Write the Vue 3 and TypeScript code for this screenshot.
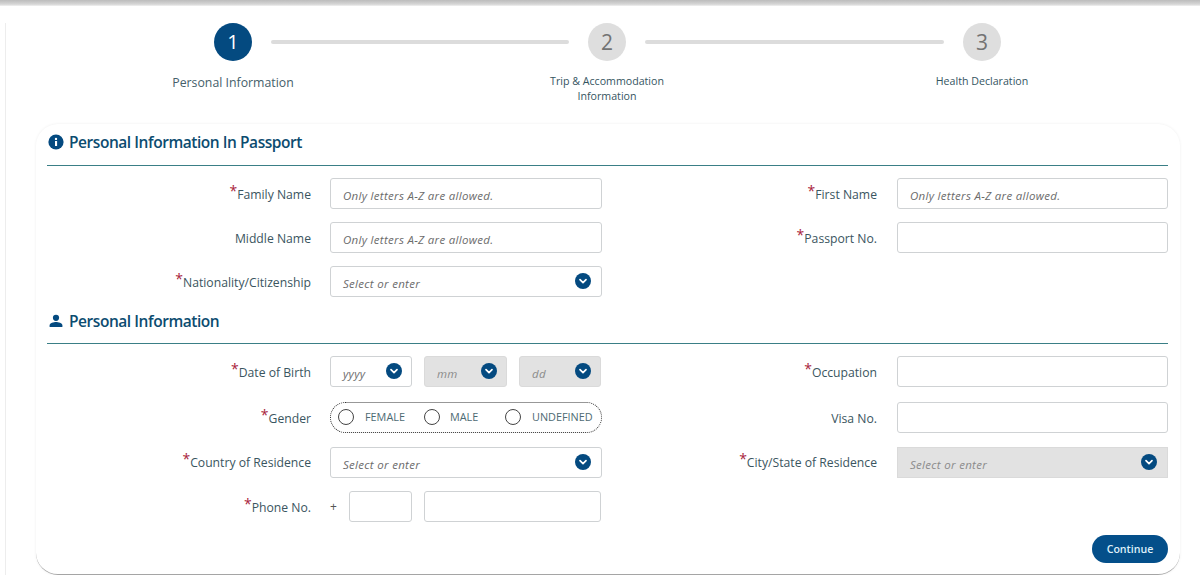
<script setup lang="ts">
const steps = [
  { n: 1, active: true },
  { n: 2, active: false },
  { n: 3, active: false },
]
</script>

<template>
  <div class="page">
    <div class="topbar"></div>
    <div class="shell">
      <div class="stepper">
        <template v-for="(s, i) in steps" :key="s.n">
          <div class="circle" :class="{ on: s.active }">{{ s.n }}</div>
          <div v-if="i < 2" class="line"></div>
        </template>
        <div class="step-label big c1">Personal Information</div>
        <div class="step-label c3">Trip &amp; Accommodation<br />Information</div>
        <div class="step-label c5">Health Declaration</div>
      </div>

      <div class="card">
        <h2 class="section-title first">
          <svg class="title-icon" viewBox="0 0 16 16" width="16" height="16">
            <circle cx="8" cy="8" r="7.6" fill="#044a80" />
            <rect x="7" y="7" width="2.1" height="5" fill="#fff" />
            <circle cx="8" cy="4.9" r="1.2" fill="#fff" />
          </svg>
          Personal Information In Passport
        </h2>
        <div class="form-grid tight">
          <label class="lab"><i>*</i>Family Name</label>
          <input class="box" placeholder="Only letters A-Z are allowed." />
          <label class="lab r"><i>*</i>First Name</label>
          <input class="box" placeholder="Only letters A-Z are allowed." />

          <label class="lab">Middle Name</label>
          <input class="box" placeholder="Only letters A-Z are allowed." />
          <label class="lab r"><i>*</i>Passport No.</label>
          <input class="box" />

          <label class="lab"><i>*</i>Nationality/Citizenship</label>
          <div class="box sel"><span>Select or enter</span><b class="chev"><svg viewBox="0 0 16 16"><path d="M5 6.6 8 9.6 11 6.6" /></svg></b></div>
        </div>

        <h2 class="section-title second">
          <svg class="title-icon" viewBox="0 0 16 16" width="16" height="16">
            <circle cx="8" cy="4.8" r="3.1" fill="#044a80" />
            <path d="M1.6 14v-1.6c0-2.3 4.2-3.3 6.4-3.3s6.4 1 6.4 3.3V14z" fill="#044a80" />
          </svg>
          Personal Information
        </h2>
        <div class="form-grid loose">
          <label class="lab"><i>*</i>Date of Birth</label>
          <div class="triple">
            <div class="box sel small"><span>yyyy</span><b class="chev"><svg viewBox="0 0 16 16"><path d="M5 6.6 8 9.6 11 6.6" /></svg></b></div>
            <div class="box sel small off"><span>mm</span><b class="chev"><svg viewBox="0 0 16 16"><path d="M5 6.6 8 9.6 11 6.6" /></svg></b></div>
            <div class="box sel small off"><span>dd</span><b class="chev"><svg viewBox="0 0 16 16"><path d="M5 6.6 8 9.6 11 6.6" /></svg></b></div>
          </div>
          <label class="lab r"><i>*</i>Occupation</label>
          <input class="box" />

          <label class="lab"><i>*</i>Gender</label>
          <div class="gender">
            <span class="opt"><em></em>FEMALE</span>
            <span class="opt"><em></em>MALE</span>
            <span class="opt"><em></em>UNDEFINED</span>
          </div>
          <label class="lab r">Visa No.</label>
          <input class="box" />

          <label class="lab"><i>*</i>Country of Residence</label>
          <div class="box sel"><span>Select or enter</span><b class="chev"><svg viewBox="0 0 16 16"><path d="M5 6.6 8 9.6 11 6.6" /></svg></b></div>
          <label class="lab r"><i>*</i>City/State of Residence</label>
          <div class="box sel off square"><span>Select or enter</span><b class="chev"><svg viewBox="0 0 16 16"><path d="M5 6.6 8 9.6 11 6.6" /></svg></b></div>

          <label class="lab"><i>*</i>Phone No.</label>
          <div class="triple phone">
            <div class="plus-cell"><span class="plus">+</span><input class="box" /></div>
            <input class="box" />
          </div>
        </div>
        <div class="actions"><button class="continue">Continue</button></div>
      </div>
    </div>
  </div>
</template>

<style>
html, body { margin: 0; background: #fff; }
</style>

<style scoped>
.page {
  height: 575px;
  overflow: hidden;
  background: #fff;
  font-family: "Open Sans", "Noto Sans", sans-serif;
  color: #3a5560;
}
.topbar {
  height: 6px;
  background: linear-gradient(#bcbcbc, #d6d6d6 70%, #f2f2f2);
}
.shell {
  margin: 17px 0 0 5px;
  border-left: 1px solid #ededed;
  height: 552px;
  box-sizing: border-box;
}
.stepper {
  display: grid;
  grid-template-columns: 38px 298px 38px 299px 38px;
  column-gap: 19px;
  grid-template-rows: 38px auto;
  padding-left: 208px;
  height: 101px;
  align-content: start;
}
.circle {
  width: 38px;
  height: 38px;
  border-radius: 50%;
  background: #dedede;
  color: #737373;
  font-size: 21px;
  line-height: 38px;
  text-align: center;
  font-weight: 400;
  grid-row: 1;
}
.circle.on { background: #044a80; color: #fff; font-size: 20px; }
.line {
  height: 4px;
  border-radius: 2px;
  background: #dcdcdc;
  align-self: center;
  grid-row: 1;
}
.step-label {
  grid-row: 2;
  justify-self: center;
  width: max-content;
  text-align: center;
  font-size: 10.65px;
  line-height: 15px;
  margin-top: 13px;
  color: #35555f;
}
.step-label.big { font-size: 12.3px; line-height: 18px; margin-top: 13px; color: #45606a; }
.c1 { grid-column: 1; }
.c3 { grid-column: 3; }
.c5 { grid-column: 5; }
.card {
  margin-left: 30px;
  width: 1144px;
  height: 451px;
  box-sizing: border-box;
  padding: 0 12px 0 11px;
  background: #fff;
  border-radius: 22px;
  box-shadow: 0 0 3px rgba(0, 0, 0, 0.07);
  border-bottom: 1px solid #a5a5a5;
}
.section-title {
  display: flex;
  align-items: center;
  gap: 5px;
  margin: 0;
  font-size: 15.5px;
  font-weight: 600;
  color: #0c4c70;
  border-bottom: 1px solid #3a7f86;
  box-sizing: border-box;
  letter-spacing: -0.45px;
}
.section-title.first { height: 42px; padding-bottom: 5px; }
.section-title.second { margin-top: 10px; height: 37px; padding-bottom: 9px; }
.title-icon { flex: none; margin-left: 1px; }
.form-grid {
  display: grid;
  grid-template-columns: 264px 272px 257px 271px;
  column-gap: 19px;
  align-items: center;
}
.form-grid.tight { margin-top: 12px; grid-auto-rows: 31px; row-gap: 13px; }
.form-grid.loose {
  margin-top: 12px;
  grid-template-rows: 32px 31px 30px 31px;
  row-gap: 14px;
}
.lab {
  text-align: right;
  font-size: 12.2px;
  color: #3a5560;
  line-height: 16px;
  padding-top: 2px;
}
.lab.r { padding-right: 1px; }
.lab i {
  font-style: normal;
  color: #a8233a;
  font-size: 14px;
  line-height: 0;
  position: relative;
  top: -3px;
}
.box {
  display: block;
  box-sizing: border-box;
  width: 100%;
  height: 31px;
  margin: 0;
  padding: 3px 12px 0;
  background: #fff;
  border: 1px solid #cfd2d4;
  border-radius: 3px;
  outline: none;
  font-family: inherit;
  font-size: 11.5px;
  letter-spacing: 0.3px;
  font-style: italic;
  color: #666;
  align-self: start;
}
.box::placeholder { color: #6c6c6c; opacity: 1; }
.sel {
  display: flex;
  align-items: center;
  justify-content: space-between;
  padding: 0 10px 0 12px;
}
.sel span { padding-top: 3px; color: #6c6c6c; }
.sel.off { background: #e2e2e2; border-color: #dadada; }
.sel.off span { color: #8b8b8b; }
.sel.square { border-radius: 0; }
.chev {
  width: 16px;
  height: 16px;
  border-radius: 50%;
  background: #044a80;
  flex: none;
  display: block;
  margin-top: -1px;
}
.chev svg { display: block; width: 16px; height: 16px; }
.chev path { fill: none; stroke: #fff; stroke-width: 1.7; stroke-linecap: round; stroke-linejoin: round; }
.triple {
  display: grid;
  grid-template-columns: 82px 83px 82px;
  column-gap: 12px;
  align-self: start;
}
.small { padding-left: 12px; padding-right: 9px; }
.phone { grid-template-columns: 82px 177px; }
.plus-cell { display: flex; align-items: center; }
.plus { width: 19px; flex: none; font-size: 12px; color: #555; }
.gender {
  display: flex;
  align-items: center;
  box-sizing: border-box;
  height: 31px;
  padding: 0 0 2px 7px;
  border: 1px dotted #333;
  border-radius: 16px;
  font-size: 10.85px;
  color: #4d6a73;
  align-self: start;
}
.opt { display: flex; align-items: center; }
.opt:nth-child(1) { width: 86px; }
.opt:nth-child(2) { width: 81px; }
.opt em {
  display: block;
  flex: none;
  box-sizing: border-box;
  width: 16px;
  height: 16px;
  margin-right: 11px;
  border: 1.5px solid #444;
  border-radius: 50%;
}
.opt:nth-child(2) em { margin-right: 10px; }
.actions { display: flex; justify-content: flex-end; margin-top: 13px; }
.continue {
  width: 76px;
  height: 28px;
  padding: 0;
  border: none;
  border-radius: 14px;
  background: #044f8a;
  color: #dff1fa;
  font-family: inherit;
  font-size: 10.6px;
  font-weight: 600;
}
</style>
